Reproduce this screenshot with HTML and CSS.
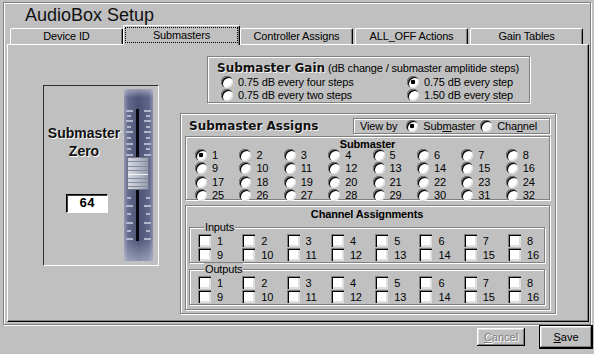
FILE: index.html
```html
<!DOCTYPE html>
<html lang="en">
<head>
    <meta charset="UTF-8">
    <meta name="viewport" content="width=device-width, initial-scale=1.0">
    <title>AudioBox Setup</title>
    <link rel="stylesheet" href="styles.css">
</head>
<body>
    <div class="window">
        <div class="frame">
            <h1 class="title">AudioBox Setup</h1>
            <!-- tab strip -->
            <div class="tabs">
                <div class="tab">Device ID</div>
                <div class="tab on"><span class="focus">Submasters</span></div>
                <div class="tab">Controller Assigns</div>
                <div class="tab">ALL_OFF Actions</div>
                <div class="tab">Gain Tables</div>
            </div>
            <div class="panel">
                <!-- fader -->
                <div class="fader-box">
                    <div class="fader-info">
                        <div class="fader-name">Submaster<br>Zero</div>
                        <div class="value">64</div>
                    </div>
                    <svg class="fader" width="29" height="172" viewBox="0 0 29 172">
                        <defs>
                            <linearGradient id="fbody" x1="0" x2="1" y1="0" y2="0">
                                <stop offset="0" stop-color="#9398b2"/>
                                <stop offset="0.14" stop-color="#646a8c"/>
                                <stop offset="0.5" stop-color="#4d5374"/>
                                <stop offset="0.86" stop-color="#60668a"/>
                                <stop offset="1" stop-color="#8a8fab"/>
                            </linearGradient>
                            <linearGradient id="fshade" x1="0" x2="0" y1="0" y2="1">
                                <stop offset="0" stop-color="#d0d4e6" stop-opacity="0.55"/>
                                <stop offset="0.05" stop-color="#d0d4e6" stop-opacity="0"/>
                                <stop offset="0.87" stop-color="#d0d4e6" stop-opacity="0"/>
                                <stop offset="1" stop-color="#d0d4e6" stop-opacity="0.5"/>
                            </linearGradient>
                            <linearGradient id="fknob" x1="0" x2="1" y1="0" y2="0">
                                <stop offset="0" stop-color="#d8dbe4"/>
                                <stop offset="0.5" stop-color="#b9bdca"/>
                                <stop offset="1" stop-color="#9499ab"/>
                            </linearGradient>
                        </defs>
                        <rect width="29" height="172" fill="url(#fbody)"/>
                        <rect width="29" height="172" fill="url(#fshade)"/>
                        <rect x="12" y="20" width="3" height="132" fill="#07070f"/>
                        <g fill="#b2b7cc">
                            <rect x="2" y="21" width="7" height="2"/><rect x="20" y="21" width="7" height="2"/>
                            <rect x="3" y="26" width="4" height="2"/><rect x="22" y="26" width="4" height="2"/>
                            <rect x="2" y="31" width="7" height="2"/><rect x="20" y="31" width="7" height="2"/>
                            <rect x="3" y="37" width="4" height="2"/><rect x="22" y="37" width="4" height="2"/>
                            <rect x="2" y="42" width="7" height="2"/><rect x="20" y="42" width="7" height="2"/>
                            <rect x="3" y="48" width="4" height="2"/><rect x="22" y="48" width="4" height="2"/>
                            <rect x="2" y="54" width="7" height="2"/><rect x="20" y="54" width="7" height="2"/>
                            <rect x="3" y="59" width="4" height="2"/><rect x="22" y="59" width="4" height="2"/>
                            <rect x="2" y="65" width="7" height="2"/><rect x="20" y="65" width="7" height="2"/>
                            <rect x="3" y="108" width="4" height="2"/><rect x="22" y="108" width="4" height="2"/>
                            <rect x="2" y="116" width="7" height="2"/><rect x="20" y="116" width="7" height="2"/>
                            <rect x="3" y="124" width="4" height="2"/><rect x="22" y="124" width="4" height="2"/>
                            <rect x="2" y="133" width="7" height="2"/><rect x="20" y="133" width="7" height="2"/>
                            <rect x="3" y="141" width="4" height="2"/><rect x="22" y="141" width="4" height="2"/>
                            <rect x="2" y="149" width="7" height="2"/><rect x="20" y="149" width="7" height="2"/>
                        </g>
                        <rect x="3.5" y="68.5" width="21" height="32" fill="url(#fknob)" stroke="#6f7489"/>
                        <g fill="#858a9e">
                            <rect x="4" y="72" width="20" height="1"/>
                            <rect x="4" y="77" width="20" height="1"/>
                            <rect x="4" y="81" width="20" height="1"/>
                            <rect x="4" y="89" width="20" height="1"/>
                            <rect x="4" y="93" width="20" height="1"/>
                            <rect x="4" y="97" width="20" height="1"/>
                        </g>
                        <rect x="4" y="85" width="20" height="1" fill="#f2f3f7"/>
                    </svg>
                </div>

                <div class="right-col">
                    <!-- gain -->
                    <div class="etched gain">
                        <div class="gain-title"><span class="caption">Submaster Gain</span> (dB change / submaster amplitide steps)</div>
                        <div class="gain-opts">
                            <div class="opt"><span class="radio"></span><span>0.75 dB every four steps</span></div>
                            <div class="opt"><span class="radio checked"></span><span>0.75 dB every step</span></div>
                            <div class="opt"><span class="radio"></span><span>0.75 dB every two steps</span></div>
                            <div class="opt"><span class="radio"></span><span>1.50 dB every step</span></div>
                        </div>
                    </div>

                    <!-- assigns -->
                    <div class="etched assigns">
                        <div class="assigns-head">
                            <span class="caption">Submaster Assigns</span>
                            <div class="etched viewby">
                                <span class="vb-label">View by</span>
                                <div class="opt vb-sub"><span class="radio checked"></span><span>Sub<u>m</u>aster</span></div>
                                <div class="opt vb-chan"><span class="radio"></span><span>Cha<u>n</u>nel</span></div>
                            </div>
                        </div>

                        <div class="etched sub-grid">
                            <div class="grid-title">Submaster</div>
                            <div class="radio-grid">
                                <div class="opt"><span class="radio checked"></span>1</div>
                                <div class="opt"><span class="radio"></span>2</div>
                                <div class="opt"><span class="radio"></span>3</div>
                                <div class="opt"><span class="radio"></span>4</div>
                                <div class="opt"><span class="radio"></span>5</div>
                                <div class="opt"><span class="radio"></span>6</div>
                                <div class="opt"><span class="radio"></span>7</div>
                                <div class="opt"><span class="radio"></span>8</div>
                                <div class="opt"><span class="radio"></span>9</div>
                                <div class="opt"><span class="radio"></span>10</div>
                                <div class="opt"><span class="radio"></span>11</div>
                                <div class="opt"><span class="radio"></span>12</div>
                                <div class="opt"><span class="radio"></span>13</div>
                                <div class="opt"><span class="radio"></span>14</div>
                                <div class="opt"><span class="radio"></span>15</div>
                                <div class="opt"><span class="radio"></span>16</div>
                                <div class="opt"><span class="radio"></span>17</div>
                                <div class="opt"><span class="radio"></span>18</div>
                                <div class="opt"><span class="radio"></span>19</div>
                                <div class="opt"><span class="radio"></span>20</div>
                                <div class="opt"><span class="radio"></span>21</div>
                                <div class="opt"><span class="radio"></span>22</div>
                                <div class="opt"><span class="radio"></span>23</div>
                                <div class="opt"><span class="radio"></span>24</div>
                                <div class="opt"><span class="radio"></span>25</div>
                                <div class="opt"><span class="radio"></span>26</div>
                                <div class="opt"><span class="radio"></span>27</div>
                                <div class="opt"><span class="radio"></span>28</div>
                                <div class="opt"><span class="radio"></span>29</div>
                                <div class="opt"><span class="radio"></span>30</div>
                                <div class="opt"><span class="radio"></span>31</div>
                                <div class="opt"><span class="radio"></span>32</div>
                            </div>
                        </div>

                        <div class="etched chan">
                            <div class="grid-title">Channel Assignments</div>
                            <div class="etched grp">
                                <span class="grp-label">Inputs</span>
                                <div class="check-grid">
                                    <div class="copt"><span class="check"></span>1</div>
                                    <div class="copt"><span class="check"></span>2</div>
                                    <div class="copt"><span class="check"></span>3</div>
                                    <div class="copt"><span class="check"></span>4</div>
                                    <div class="copt"><span class="check"></span>5</div>
                                    <div class="copt"><span class="check"></span>6</div>
                                    <div class="copt"><span class="check"></span>7</div>
                                    <div class="copt"><span class="check"></span>8</div>
                                    <div class="copt"><span class="check"></span>9</div>
                                    <div class="copt"><span class="check"></span>10</div>
                                    <div class="copt"><span class="check"></span>11</div>
                                    <div class="copt"><span class="check"></span>12</div>
                                    <div class="copt"><span class="check"></span>13</div>
                                    <div class="copt"><span class="check"></span>14</div>
                                    <div class="copt"><span class="check"></span>15</div>
                                    <div class="copt"><span class="check"></span>16</div>
                                </div>
                            </div>
                            <div class="etched grp outputs">
                                <span class="grp-label">Outputs</span>
                                <div class="check-grid">
                                    <div class="copt"><span class="check"></span>1</div>
                                    <div class="copt"><span class="check"></span>2</div>
                                    <div class="copt"><span class="check"></span>3</div>
                                    <div class="copt"><span class="check"></span>4</div>
                                    <div class="copt"><span class="check"></span>5</div>
                                    <div class="copt"><span class="check"></span>6</div>
                                    <div class="copt"><span class="check"></span>7</div>
                                    <div class="copt"><span class="check"></span>8</div>
                                    <div class="copt"><span class="check"></span>9</div>
                                    <div class="copt"><span class="check"></span>10</div>
                                    <div class="copt"><span class="check"></span>11</div>
                                    <div class="copt"><span class="check"></span>12</div>
                                    <div class="copt"><span class="check"></span>13</div>
                                    <div class="copt"><span class="check"></span>14</div>
                                    <div class="copt"><span class="check"></span>15</div>
                                    <div class="copt"><span class="check"></span>16</div>
                                </div>
                            </div>
                        </div>
                    </div>
                </div>
            </div>
        </div>
        <!-- dialog buttons -->
        <div class="buttons">
            <button class="btn cancel" disabled><u>C</u>ancel</button>
            <button class="btn save"><u>S</u>ave</button>
        </div>
    </div>
</body>
</html>
```

FILE: styles.css
```css
*{
    margin: 0;
    padding: 0;
    box-sizing: border-box;
}
body{
    background: #c0c0c0;
    font-family: "Liberation Sans", Arial, sans-serif;
    font-size: 11px;
    letter-spacing: -0.15px;
    color: #000;
}
.window{
    width: 594px;
    height: 354px;
}
.etched{
    border: 1px solid #808080;
    box-shadow: inset 1px 1px 0 #fff, 1px 1px 0 #fff;
}
.frame{
    width: 588px;
    height: 323px;
    margin: 2px 0 0 3px;
    border: 1px solid #808080;
    box-shadow: inset 1px 1px 0 #fff, 1px 1px 0 #fff;
}
.title{
    height: 22px;
    padding-left: 21px;
    font-size: 18px;
    font-weight: normal;
    letter-spacing: 0;
    line-height: 24px;
    color: #101010;
}

/* tabs */
.tabs{
    display: flex;
    align-items: flex-end;
    height: 19px;
    padding-left: 6px;
}
.tab{
    width: 113px;
    height: 16px;
    margin-right: 2px;
    border-top: 1px solid #fff;
    border-left: 1px solid #fff;
    border-right: 1px solid #000;
    border-radius: 2px 2px 0 0;
    box-shadow: inset -1px 0 0 #808080;
    text-align: center;
    line-height: 14px;
    white-space: nowrap;
}
.tab.on{
    position: relative;
    z-index: 1;
    width: 117px;
    height: 20px;
    margin: 0 0 -1px -2px;
    padding: 1px 1px 0;
    background: #c0c0c0;
}
.focus{
    display: block;
    height: 16px;
    border: 1px dotted #000;
    line-height: 14px;
}

.panel{
    display: flex;
    align-items: flex-start;
    width: 582px;
    height: 278px;
    margin-left: 3px;
    padding: 11px 0 0 35px;
    border-top: 1px solid #fff;
    border-left: 1px solid #fff;
    border-right: 1px solid #000;
    border-bottom: 1px solid #000;
    box-shadow: inset -1px -1px 0 #808080;
}

/* fader */
.fader-box{
    display: flex;
    width: 116px;
    height: 181px;
    margin-top: 29px;
    border: 1px solid;
    border-color: #303030 #fff #fff #303030;
}
.fader-info{
    flex: 1;
    padding-top: 38px;
}
.fader-name{
    text-align: center;
    font-size: 14px;
    font-weight: bold;
    letter-spacing: 0;
    line-height: 18px;
    color: #111;
    text-shadow: 1px 1px 0 #fff;
}
.value{
    width: 42px;
    height: 19px;
    margin: 34px 0 0 22px;
    border: 1px solid;
    border-color: #000 #fff #fff #000;
    box-shadow: inset 1px 1px 0 #404040;
    background: #fff;
    text-align: center;
    font-family: "Liberation Mono", monospace;
    font-size: 13px;
    font-weight: bold;
    letter-spacing: 0;
    line-height: 17px;
}
.fader{
    display: block;
    margin: 3px 5px 0 0;
}

.right-col{
    width: 376px;
    margin-left: 21px;
}
.caption{
    font-family: "DejaVu Sans", sans-serif;
    font-size: 12px;
    font-weight: bold;
    letter-spacing: 0;
    color: #111;
    text-shadow: 1px 1px 0 rgba(255,255,255,.8);
}

/* radio + checkbox */
.opt,.copt{
    display: flex;
    align-items: center;
    white-space: nowrap;
}
.opt{
    gap: 5px;
}
.copt{
    gap: 6px;
}
.radio{
    flex: none;
    width: 12px;
    height: 12px;
    border-radius: 50%;
    background: #fff;
    box-shadow: inset 1px 1px 0 #808080, inset 2px 2px 0 #000, inset -1px -1px 0 #dfdfdf;
}
.radio.checked{
    background: radial-gradient(circle, #000 0 2px, #fff 2.6px);
}
.check{
    flex: none;
    width: 13px;
    height: 13px;
    background: #fff;
    box-shadow: inset 1px 1px 0 #808080, inset 2px 2px 0 #000, inset -2px -2px 0 #dfdfdf;
}

/* gain */
.gain{
    width: 323px;
    height: 47px;
    margin-left: 27px;
    padding: 4px 0 0 9px;
}
.gain-title{
    height: 14px;
    line-height: 14px;
    white-space: nowrap;
}
.gain-opts{
    display: grid;
    grid-template-columns: 186px auto;
    grid-auto-rows: 13px;
    padding-left: 4px;
}

/* assigns */
.assigns{
    width: 376px;
    height: 201px;
    margin-top: 10px;
    padding: 0 5px 0 4px;
}
.assigns-head{
    display: flex;
    justify-content: space-between;
    align-items: flex-start;
    height: 22px;
    padding: 4px 0 0 4px;
}
.assigns-head .caption{
    line-height: 16px;
}
.viewby{
    display: flex;
    align-items: center;
    width: 197px;
    height: 16px;
    padding-left: 6px;
    white-space: nowrap;
}
.vb-sub{
    margin-left: 9px;
}
.vb-chan{
    margin-left: 5px;
}
.grid-title{
    height: 12px;
    text-align: center;
    font-weight: bold;
    line-height: 12px;
}
.sub-grid{
    height: 64px;
    padding: 1px 0 0 9px;
}
.sub-grid .grid-title{
    margin-bottom: -2px;
    padding-right: 9px;
}
.radio-grid{
    display: grid;
    grid-template-columns: repeat(7, 44.4px) auto;
    grid-auto-rows: 13.5px;
}
.chan{
    height: 105px;
    margin-top: 5px;
    padding: 2px 4px 0 3px;
}
.grp{
    height: 36px;
    margin-top: 7px;
    padding-left: 8px;
}
.grp.outputs{
    margin-top: 6px;
}
.grp-label{
    display: block;
    width: fit-content;
    margin: -7px 0 0 6px;
    padding: 0 1px;
    background: #c0c0c0;
    line-height: 13px;
}
.check-grid{
    display: grid;
    grid-template-columns: repeat(7, 44.3px) auto;
    grid-auto-rows: 13px;
    row-gap: 1px;
}

/* buttons */
.buttons{
    display: flex;
    justify-content: flex-end;
    align-items: center;
    gap: 14px;
    height: 24px;
    padding-right: 1px;
}
.btn{
    background: #c0c0c0;
    border: 0;
    font-family: "Liberation Sans", Arial, sans-serif;
    font-size: 11px;
    color: #000;
    box-shadow: inset -1px -1px 0 #000, inset 1px 1px 0 #fff, inset -2px -2px 0 #808080, inset 2px 2px 0 #dfdfdf;
}
.btn.cancel{
    width: 48px;
    height: 18px;
    color: #808080;
    text-shadow: 1px 1px 0 #fff;
}
.btn.save{
    width: 54px;
    height: 24px;
    border: 1px solid #000;
}
```
